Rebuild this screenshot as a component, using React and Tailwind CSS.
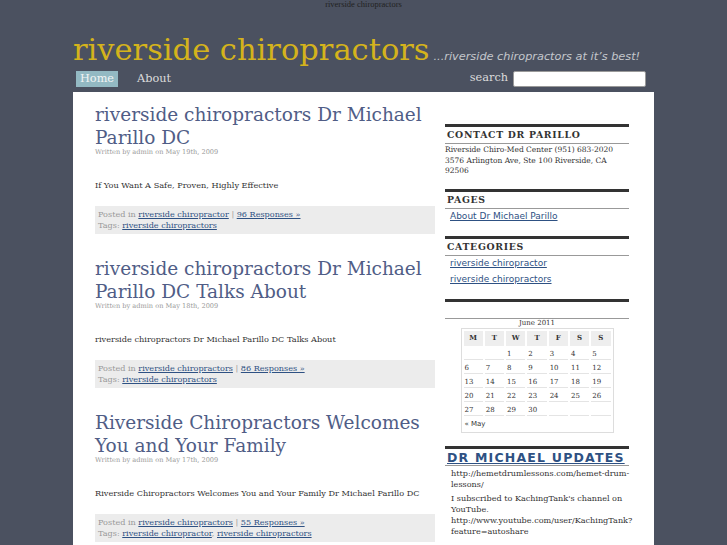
const serif = { fontFamily: '"DejaVu Serif", "Liberation Serif", serif' };
const sans = { fontFamily: '"DejaVu Sans", "Liberation Sans", sans-serif' };

const posts = [
  {
    title: 'riverside chiropractors Dr Michael Parillo DC',
    date: 'May 19th, 2009',
    body: 'If You Want A Safe, Proven, Highly Effective',
    cats: ['riverside chiropractor'],
    responses: '96 Responses »',
    tags: ['riverside chiropractors'],
  },
  {
    title: 'riverside chiropractors Dr Michael Parillo DC Talks About',
    date: 'May 18th, 2009',
    body: 'riverside chiropractors Dr Michael Parillo DC Talks About',
    cats: ['riverside chiropractors'],
    responses: '86 Responses »',
    tags: ['riverside chiropractors'],
  },
  {
    title: 'Riverside Chiropractors Welcomes You and Your Family',
    date: 'May 17th, 2009',
    body: 'Riverside Chiropractors Welcomes You and Your Family Dr Michael Parillo DC',
    cats: ['riverside chiropractors'],
    responses: '55 Responses »',
    tags: ['riverside chiropractor', 'riverside chiropractors'],
  },
];

const weeks = [
  ['', '', '1', '2', '3', '4', '5'],
  ['6', '7', '8', '9', '10', '11', '12'],
  ['13', '14', '15', '16', '17', '18', '19'],
  ['20', '21', '22', '23', '24', '25', '26'],
  ['27', '28', '29', '30', '', '', ''],
];

const Post = ({ p }) => (
  <div className="mb-[23px]">
    <h2 className="text-[18.5px] leading-[23px] text-[#505d86]">{p.title}</h2>
    <div className="-mt-[1px] text-[6.6px] leading-[9px] text-[#999]">
      Written by admin on {p.date}
    </div>
    <p className="mt-[22px] text-[8.2px] leading-[12px] text-[#333]">{p.body}</p>
    <div className="mt-[15px] bg-[#ececec] px-[3px] py-[3px] text-[8.1px] leading-[11px] text-[#999]">
      <div>
        Posted in{' '}
        {p.cats.map((c) => (
          <a key={c} href="#" className="text-[#2e5183] underline">
            {c}
          </a>
        ))}{' '}
        |{' '}
        <a href="#" className="text-[#2e5183] underline">
          {p.responses}
        </a>
      </div>
      <div>
        Tags:{' '}
        {p.tags.map((t, i) => (
          <span key={t}>
            {i > 0 && ', '}
            <a href="#" className="text-[#2e5183] underline">
              {t}
            </a>
          </span>
        ))}
      </div>
    </div>
  </div>
);

const Widget = ({ title, children, className = '' }) => (
  <div className={`border-t-[3px] border-[#333] ${className}`}>
    <h3 className="border-b border-[#999] h-[17px] leading-[16px] px-[2px] text-[9.3px] font-bold tracking-[0.7px] text-[#333] uppercase">
      {title}
    </h3>
    {children}
  </div>
);

export default function App() {
  return (
    <div className="min-h-[545px] bg-[#4b5160]" style={serif}>
      <div className="text-center text-[8.5px] leading-[8px] text-[#222]" style={{ fontFamily: '"Liberation Serif", serif' }}>
        riverside chiropractors
      </div>
      <div className="w-[581px] mx-auto">
        <div className="mt-[25px] flex items-baseline gap-[4px]">
          <h1 className="text-[30.5px] leading-[34px] text-[#d4b31c]">riverside chiropractors</h1>
          <span className="text-[11.3px] italic text-[#c4c7cc]" style={sans}>
            ...riverside chiropractors at it’s best!
          </span>
        </div>
        <div className="mt-[3px] flex items-center h-[17px] pl-[3px] pr-[8px]">
          <a href="#" className="h-[16px] leading-[16px] px-[4px] bg-[#93b9c3] text-[11.3px] text-[#f2f4f4]">
            Home
          </a>
          <a href="#" className="ml-[19px] text-[11.3px] leading-[16px] text-[#dcdcdc]">
            About
          </a>
          <div className="ml-auto flex items-center gap-[5px]">
            <span className="text-[11.3px] text-[#dcdcdc]">search</span>
            <input className="w-[133px] h-[16px] bg-white rounded-[2px] border border-[#999]" />
          </div>
        </div>
        <div className="mt-[5px] bg-white min-h-[460px] flex pl-[22px] pr-[25px] pt-[11px] gap-[10px]">
          <div className="w-[340px]">
            {posts.map((p) => (
              <Post key={p.title} p={p} />
            ))}
          </div>
          <div className="w-[184px] pt-[21px]">
            <Widget title="Contact Dr Parillo" className="mb-[12px]">
              <div className="text-[7.5px] leading-[10.5px] text-[#333] whitespace-nowrap pt-[1px]">
                Riverside Chiro-Med Center (951) 683-2020
                <br />
                3576 Arlington Ave, Ste 100 Riverside, CA
                <br />
                92506
              </div>
            </Widget>
            <Widget title="Pages" className="mb-[14px]">
              <div className="pl-[5px] pt-[1px] text-[9px] leading-[12px]" style={sans}>
                <a href="#" className="text-[#2e5183] underline">About Dr Michael Parillo</a>
              </div>
            </Widget>
            <Widget title="Categories" className="mb-[12px]">
              <div className="pl-[5px] -mt-[1px] text-[9px] leading-[16px] flex flex-col" style={sans}>
                <a href="#" className="text-[#2e5183] underline">riverside chiropractor</a>
                <a href="#" className="text-[#2e5183] underline">riverside chiropractors</a>
              </div>
            </Widget>
            <Widget title="" className="mb-[13px]">
              <div className="text-center text-[7px] leading-[9px] text-[#333]">June 2011</div>
              <div className="mx-auto w-[153px] border border-[#ddd] p-[2px] grid grid-cols-7 gap-[2px] text-[7px] text-[#333]">
                {['M', 'T', 'W', 'T', 'F', 'S', 'S'].map((d, i) => (
                  <div key={i} className="h-[15px] bg-[#eee] flex items-center justify-center font-bold">
                    {d}
                  </div>
                ))}
                {weeks.flat().map((d, i) => (
                  <div key={i} className="h-[12px] leading-[12px] border-b border-[#e4e4e4] pl-[1px]">
                    {d}
                  </div>
                ))}
                <div className="col-span-7 h-[12px] leading-[12px] pl-[1px] text-[7px]" style={sans}>
                  « May
                </div>
              </div>
            </Widget>
            <div className="border-t-[3px] border-[#333]">
              <h3 className="border-b border-[#999] h-[17px] leading-[16px] px-[2px]">
                <a href="#" className="text-[12.5px] font-bold tracking-[1.2px] text-[#2e5183] underline" style={sans}>
                  DR MICHAEL UPDATES
                </a>
              </h3>
              <div className="pl-[6px] pt-[2px] text-[8.1px] leading-[11px] text-[#333] whitespace-nowrap">
                <p>
                  http://hemetdrumlessons.com/hemet-drum-
                  <br />
                  lessons/
                </p>
                <p className="mt-[3.5px]">
                  I subscribed to KachingTank's channel on
                  <br />
                  YouTube.
                  <br />
                  http://www.youtube.com/user/KachingTank?
                  <br />
                  feature=autoshare
                </p>
              </div>
            </div>
          </div>
        </div>
      </div>
    </div>
  );
}
